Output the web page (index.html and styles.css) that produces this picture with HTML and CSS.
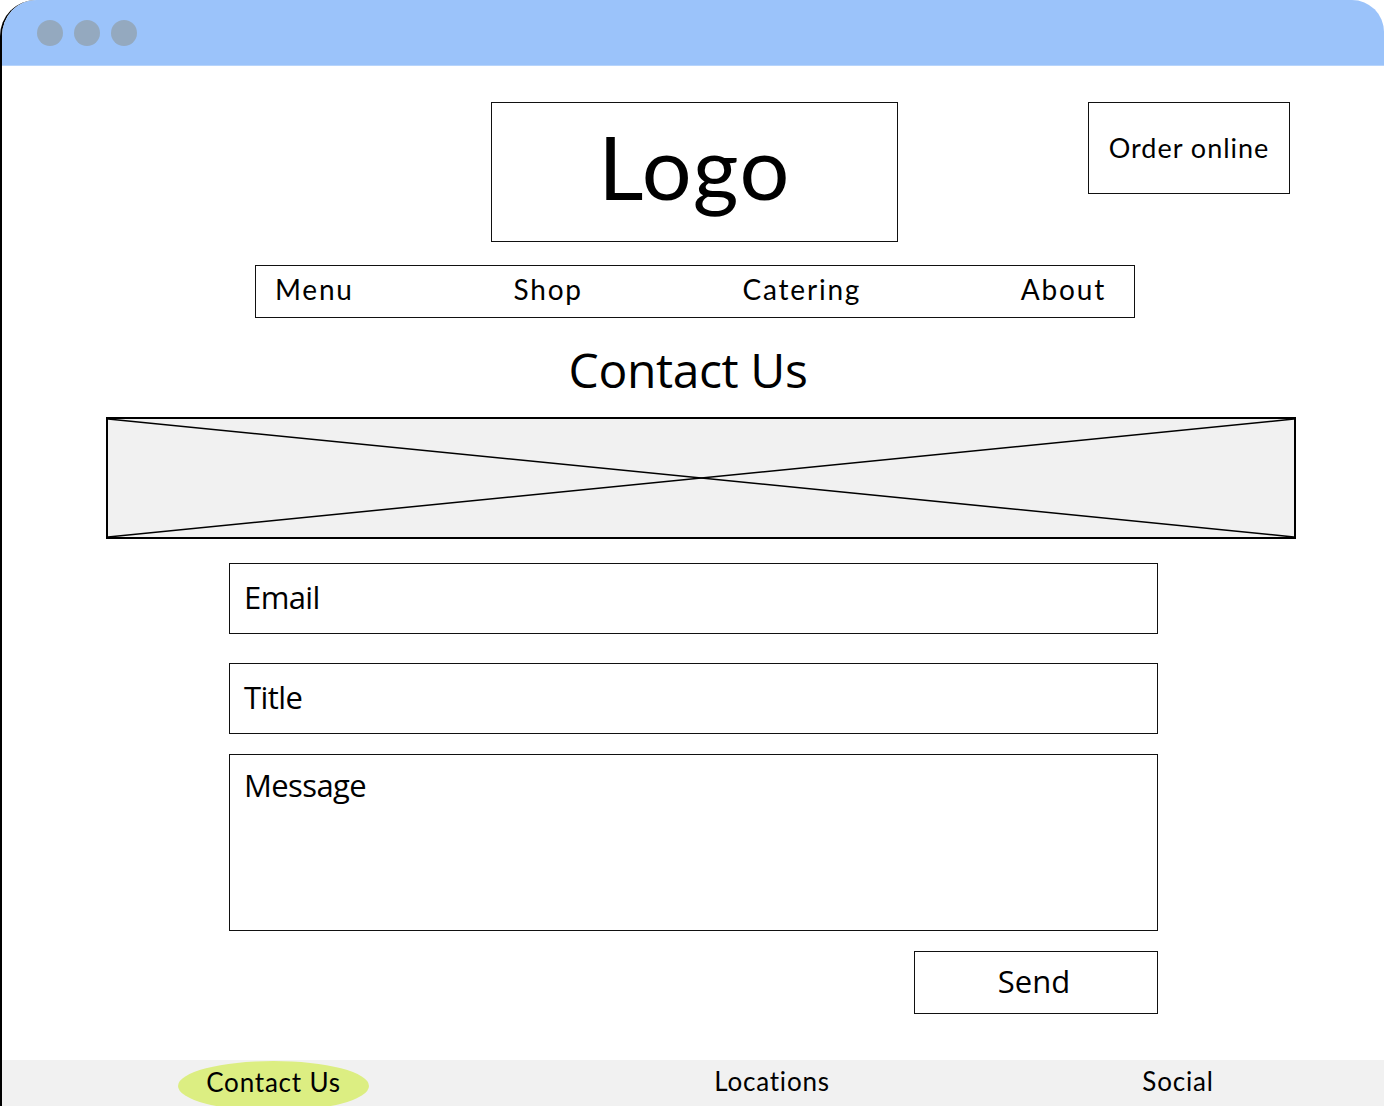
FILE: index.html
```html
<!DOCTYPE html>
<html lang="en">
<head>
<meta charset="utf-8">
<title>Contact Us</title>
<link rel="stylesheet" href="styles.css">
</head>
<body>
<div class="window">
  <div class="titlebar">
    <span class="dot"></span><span class="dot"></span><span class="dot"></span>
  </div>
  <main class="content">
    <header class="top">
      <div class="logo">Logo</div>
      <a class="order" href="#">Order online</a>
    </header>
    <nav class="nav">
      <a href="#">Menu</a>
      <a href="#">Shop</a>
      <a href="#">Catering</a>
      <a href="#">About</a>
    </nav>
    <h1 class="heading">Contact Us</h1>
    <div class="placeholder">
      <svg class="cross" viewBox="0 0 100 100" preserveAspectRatio="none">
        <line x1="0" y1="0" x2="100" y2="100" vector-effect="non-scaling-stroke"/>
        <line x1="0" y1="100" x2="100" y2="0" vector-effect="non-scaling-stroke"/>
      </svg>
    </div>
    <form class="form">
      <div class="field field-email">Email</div>
      <div class="field field-title">Title</div>
      <div class="field field-message">Message</div>
      <div class="actions"><button type="button" class="send">Send</button></div>
    </form>
  </main>
  <footer class="footer">
    <span class="fitem active">Contact Us</span>
    <span class="fitem locations">Locations</span>
    <span class="fitem social">Social</span>
  </footer>
</div>
</body>
</html>
```
FILE: styles.css
```css
html, body {
  margin: 0;
  padding: 0;
  background: #ffffff;
}
body {
  width: 1384px;
  height: 1106px;
  overflow: hidden;
}
.window {
  box-sizing: border-box;
  width: 1384px;
  height: 1106px;
  border-left: 2px solid #000;
  border-top-left-radius: 36px;
  border-top-right-radius: 32px;
  overflow: hidden;
  display: flex;
  flex-direction: column;
  background: #fff;
}
.titlebar {
  height: 66px;
  background: #9bc3fa;
  border-bottom: 1px solid #b7d4fb;
  box-sizing: border-box;
  display: flex;
  align-items: center;
  gap: 11px;
  padding-left: 35px;
}
.dot {
  width: 26px;
  height: 26px;
  border-radius: 50%;
  background: #94a9bf;
  margin-top: 1px;
}
.content {
  flex: 1;
  display: flex;
  flex-direction: column;
}
.top {
  display: grid;
  grid-template-columns: 1fr auto 1fr;
  align-items: start;
  padding-top: 36px;
}
.logo {
  grid-column: 2;
  box-sizing: border-box;
  width: 407px;
  height: 140px;
  border: 1.5px solid #111;
  display: flex;
  align-items: center;
  justify-content: center;
  font-family: Lato, "Open Sans", sans-serif;
  font-size: 88px;
  letter-spacing: 1.5px;
  color: #000;
  padding-bottom: 12px;
  margin-left: 3px;
}
.order {
  grid-column: 3;
  justify-self: end;
  margin-right: 94px;
  box-sizing: border-box;
  width: 202px;
  height: 92px;
  border: 1.5px solid #111;
  display: flex;
  align-items: center;
  justify-content: center;
  font-family: Lato, sans-serif;
  font-size: 27px;
  letter-spacing: 1px;
  color: #000;
  text-decoration: none;
  padding-bottom: 2px;
  margin-top: 0;
}
.nav {
  box-sizing: border-box;
  width: 880px;
  height: 53px;
  margin: 23px 0 0 253px;
  border: 1.5px solid #111;
  display: flex;
  justify-content: space-between;
  align-items: center;
  padding: 0 28px 5px 19px;
}
.nav a {
  font-family: Lato, sans-serif;
  font-size: 28px;
  letter-spacing: 1.8px;
  color: #000;
  text-decoration: none;
}
.heading {
  margin: 22px 0 17px;
  padding-right: 10px;
  text-align: center;
  font-family: "Open Sans", sans-serif;
  font-weight: 400;
  font-size: 48px;
  line-height: 60px;
  letter-spacing: -0.4px;
  color: #000;
}
.placeholder {
  position: relative;
  box-sizing: border-box;
  width: 1190px;
  height: 122px;
  margin-left: 104px;
  background: #f1f1f1;
  border: 2px solid #000;
}
.cross {
  position: absolute;
  left: 0;
  top: 0;
  width: 100%;
  height: 100%;
}
.cross line {
  stroke: #000;
  stroke-width: 1.5;
}
.form {
  width: 929px;
  margin: 24px auto 0;
  padding-left: 1px;
  display: flex;
  flex-direction: column;
}
.field {
  box-sizing: border-box;
  width: 929px;
  border: 1.5px solid #111;
  font-family: "Open Sans", sans-serif;
  font-size: 31px;
  letter-spacing: -0.6px;
  color: #000;
  padding-left: 14px;
}
.field-email {
  height: 71px;
  display: flex;
  align-items: center;
  padding-bottom: 3px;
}
.field-title {
  height: 71px;
  margin-top: 29px;
  display: flex;
  align-items: center;
  padding-bottom: 3px;
}
.field-message {
  height: 177px;
  margin-top: 20px;
  padding-top: 6px;
  line-height: 48px;
}
.actions {
  display: flex;
  justify-content: flex-end;
  margin-top: 20px;
}
.send {
  box-sizing: border-box;
  width: 244px;
  height: 63px;
  background: #fff;
  border: 1.5px solid #111;
  font-family: "Open Sans", sans-serif;
  font-size: 31px;
  letter-spacing: 0;
  color: #000;
  padding: 0 4px 4px 0;
  cursor: pointer;
}
.footer {
  height: 46px;
  background: #f1f1f1;
  display: flex;
  align-items: flex-start;
  overflow: hidden;
  padding-left: 176px;
  flex-shrink: 0;
}
.fitem {
  display: block;
  width: 200px;
  text-align: center;
  font-family: Lato, sans-serif;
  font-size: 26px;
  letter-spacing: 0.8px;
  line-height: 43px;
  color: #000;
}
.fitem.active {
  width: 191px;
  height: 50px;
  margin-top: 1px;
  border-radius: 50%;
  background: #dcee82;
  line-height: 42px;
}
.fitem.locations {
  margin-left: 303px;
}
.fitem.social {
  margin-left: 206px;
}
```
